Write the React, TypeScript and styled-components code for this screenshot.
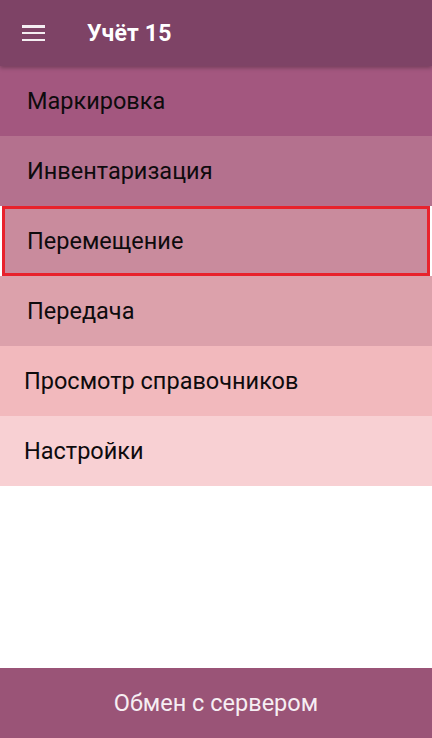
import { FC } from 'react'
import styled, { createGlobalStyle } from 'styled-components'

const GlobalStyle = createGlobalStyle`
  html, body {
    margin: 0;
    padding: 0;
    height: 100%;
    background: #ffffff;
    font-family: Roboto, 'Noto Sans', 'Liberation Sans', sans-serif;
  }
  #root {
    height: 100%;
  }
`

const Screen = styled.div`
  display: flex;
  flex-direction: column;
  height: 738px;
  width: 432px;
  background: #ffffff;
  overflow: hidden;
`

const Toolbar = styled.header`
  position: relative;
  z-index: 2;
  display: flex;
  align-items: center;
  height: 66px;
  flex-shrink: 0;
  padding-left: 22px;
  background: #7e4366;
  box-shadow: 0 2px 4px rgba(0, 0, 0, 0.28);
`

const MenuButton = styled.div`
  display: flex;
  flex-direction: column;
  justify-content: space-between;
  width: 23px;
  height: 16px;

  span {
    display: block;
    height: 2.5px;
    background: #f4eef2;
  }
`

const Title = styled.h1`
  margin: 0 0 0 42px;
  font-size: 23px;
  font-weight: 700;
  color: #ffffff;
  letter-spacing: 0.2px;
`

const MenuList = styled.nav`
  display: flex;
  flex-direction: column;
`

type RowProps = { $bg: string; $selected?: boolean; $indent: number }

const MenuRow = styled.div<RowProps>`
  display: flex;
  align-items: center;
  box-sizing: border-box;
  height: 70px;
  padding-left: ${p => p.$indent}px;
  background: ${p => p.$bg};
  font-size: 23.5px;
  color: #0e0b0d;
  ${p =>
    p.$selected &&
    `
    margin: 0 2px 0 2px;
    border: 3px solid #e8222c;
    padding-left: ${p.$indent - 5}px;
  `}
`

const Spacer = styled.div`
  flex: 1;
`

const FooterButton = styled.div`
  display: flex;
  align-items: center;
  justify-content: center;
  height: 70px;
  flex-shrink: 0;
  background: #9a5477;
  color: #f6eef3;
  font-size: 23.5px;
`

const items = [
  { label: 'Маркировка', bg: '#a3577f', indent: 27 },
  { label: 'Инвентаризация', bg: '#b4718e', indent: 27 },
  { label: 'Перемещение', bg: '#c98b9d', indent: 27, selected: true },
  { label: 'Передача', bg: '#dca1ab', indent: 27 },
  { label: 'Просмотр справочников', bg: '#f2b9bd', indent: 24 },
  { label: 'Настройки', bg: '#f8d0d3', indent: 24 },
]

const App: FC = () => {
  return (
    <Screen>
      <GlobalStyle />
      <Toolbar>
        <MenuButton>
          <span />
          <span />
          <span />
        </MenuButton>
        <Title>Учёт 15</Title>
      </Toolbar>
      <MenuList>
        {items.map(item => (
          <MenuRow key={item.label} $bg={item.bg} $indent={item.indent} $selected={item.selected}>
            {item.label}
          </MenuRow>
        ))}
      </MenuList>
      <Spacer />
      <FooterButton>Обмен с сервером</FooterButton>
    </Screen>
  )
}

export default App
